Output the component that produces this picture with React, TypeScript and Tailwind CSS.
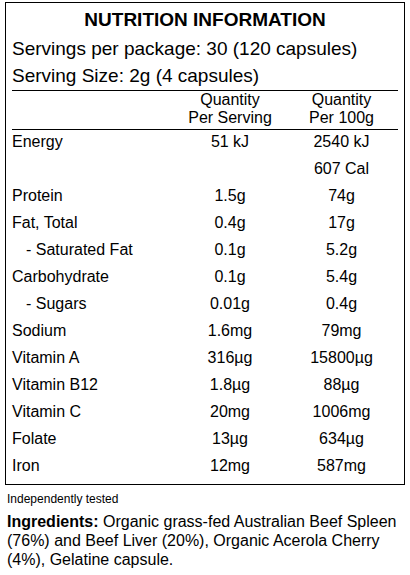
import React from "react";

type Row = { label: string; a: string; b: string; indent?: boolean };

const rows: Row[] = [
  { label: "Energy", a: "51 kJ", b: "2540 kJ" },
  { label: "", a: "", b: "607 Cal" },
  { label: "Protein", a: "1.5g", b: "74g" },
  { label: "Fat, Total", a: "0.4g", b: "17g" },
  { label: "- Saturated Fat", a: "0.1g", b: "5.2g", indent: true },
  { label: "Carbohydrate", a: "0.1g", b: "5.4g" },
  { label: "- Sugars", a: "0.01g", b: "0.4g", indent: true },
  { label: "Sodium", a: "1.6mg", b: "79mg" },
  { label: "Vitamin A", a: "316µg", b: "15800µg" },
  { label: "Vitamin B12", a: "1.8µg", b: "88µg" },
  { label: "Vitamin C", a: "20mg", b: "1006mg" },
  { label: "Folate", a: "13µg", b: "634µg" },
  { label: "Iron", a: "12mg", b: "587mg" },
];

export default function App() {
  return (
    <div
      className="w-[410px] h-[575px] bg-white text-black overflow-hidden"
      style={{ fontFamily: '"Liberation Sans", Arial, sans-serif' }}
    >
      <div className="pt-[2px] pl-[5px]">
        <div className="w-[400px] border border-black px-[6px] pb-[3px]">
          <div className="pt-[1px] h-[32.4px] leading-[31px] text-[19px] font-bold text-center">
            NUTRITION INFORMATION
          </div>
          <div className="text-[19px] leading-[27px]">Servings per package: 30 (120 capsules)</div>
          <div className="text-[19px] leading-[27px]">Serving Size: 2g (4 capsules)</div>
          <div className="mt-[0.6px] border-t border-black" />
          <div className="grid grid-cols-[163px_110px_113px] text-[16px] leading-[18px] pb-[2px]">
            <div />
            <div className="text-center">
              Quantity
              <br />
              Per Serving
            </div>
            <div className="text-center">
              Quantity
              <br />
              Per 100g
            </div>
          </div>
          <div className="border-t border-black" />
          <div className="flex flex-col">
            {rows.map((r, i) => (
              <div
                key={i}
                className="grid grid-cols-[163px_110px_113px] h-[27px] text-[16px] leading-[24px]"
              >
                <div className={r.indent ? "pl-[14px]" : ""}>{r.label}</div>
                <div className="text-center">{r.a}</div>
                <div className="text-center">{r.b}</div>
              </div>
            ))}
          </div>
        </div>
      </div>
      <div className="pl-[7px] mt-[6px] text-[12px] leading-[16px]">Independently tested</div>
      <div className="pl-[7px] mt-[5px] w-[405px] text-[16px] leading-[19px]">
        <span className="font-bold">Ingredients:</span> Organic grass-fed Australian Beef Spleen
        (76%) and Beef Liver (20%), Organic Acerola Cherry (4%), Gelatine capsule.
      </div>
    </div>
  );
}
